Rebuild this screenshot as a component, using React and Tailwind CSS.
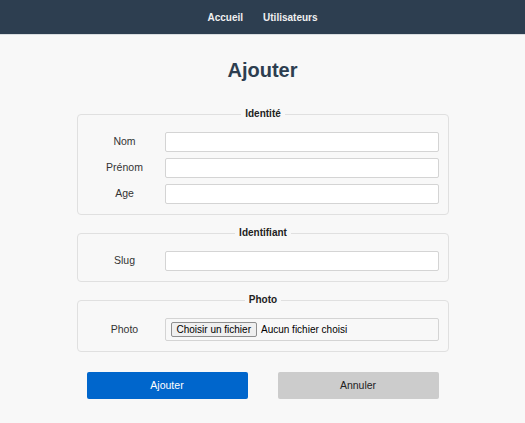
import { useState } from "react";

function Field({ label, children }) {
  return (
    <div className="flex items-center gap-[3px]">
      <label className="w-[74px] text-center text-[10.5px] text-[#333]">{label}</label>
      {children}
    </div>
  );
}

function TextInput() {
  return (
    <input
      type="text"
      className="flex-1 h-5 bg-white border border-[#d4d4d4] rounded-[2px] px-1 text-[10.5px] outline-none"
    />
  );
}

function Group({ title, children }) {
  return (
    <fieldset className="border border-[#e0e0e0] rounded-[4px] pl-2.5 pr-[9px] pt-3 pb-2.5">
      <legend align="center" className="mx-auto px-1 text-[10px] leading-[12px] font-bold text-[#222]">
        {title}
      </legend>
      <div className="flex flex-col gap-1.5">{children}</div>
    </fieldset>
  );
}

export default function App() {
  const [form, setForm] = useState({ nom: "", prenom: "", age: "", slug: "" });

  return (
    <div className="min-h-screen bg-[#f8f8f8]" style={{ fontFamily: '"Liberation Sans", Arial, sans-serif' }}>
      {/* NAV */}
      <nav className="h-[35px] bg-[#2d3e50] border-b border-[#d9dde0] flex items-center justify-center gap-5">
        <a className="text-[10px] font-bold text-[#f0f0f0] cursor-pointer">Accueil</a>
        <a className="text-[10px] font-bold text-[#f0f0f0] cursor-pointer">Utilisateurs</a>
      </nav>

      <h1 className="mt-[23px] text-center text-[20px] leading-[24px] font-bold text-[#2d3e50]">Ajouter</h1>

      <form className="w-[372px] mx-auto mt-[26px]" onSubmit={(e) => e.preventDefault()}>
        <div className="flex flex-col gap-3">
          <Group title="Identité">
            <Field label="Nom">
              <TextInput />
            </Field>
            <Field label="Prénom">
              <TextInput />
            </Field>
            <Field label="Age">
              <TextInput />
            </Field>
          </Group>

          <Group title="Identifiant">
            <Field label="Slug">
              <TextInput />
            </Field>
          </Group>

          <Group title="Photo">
            <Field label="Photo">
              <div className="flex-1 h-[23px] border border-[#d4d4d4] rounded-[2px] flex items-center px-[5px] gap-[4px]">
                <span className="h-[15px] px-[5px] flex items-center bg-[#efefef] border border-[#8f8f8f] rounded-[2px] text-[10px] text-black">
                  Choisir un fichier
                </span>
                <span className="text-[10px] text-black">Aucun fichier choisi</span>
              </div>
            </Field>
          </Group>
        </div>

        {/* BUTTONS */}
        <div className="flex gap-[30px] px-2.5 mt-5">
          <button type="submit" className="flex-1 h-[27px] bg-[#0066cc] text-white text-[10.5px] rounded-[2px]">
            Ajouter
          </button>
          <button type="button" className="flex-1 h-[27px] bg-[#cccccc] text-[#222] text-[10.5px] rounded-[2px]">
            Annuler
          </button>
        </div>
      </form>
    </div>
  );
}
